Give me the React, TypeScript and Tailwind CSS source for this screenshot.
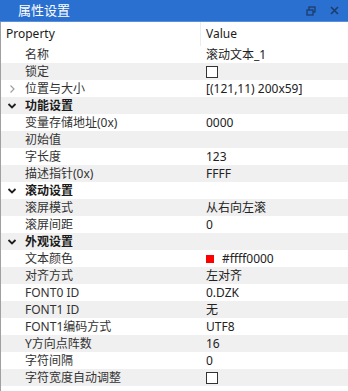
import React from 'react';

type Row =
    | { kind: 'cat'; label: string }
    | { kind: 'prop'; label: string; value?: string; check?: boolean; color?: string; collapsed?: boolean };

const rows: Row[] = [
    { kind: 'prop', label: '名称', value: '滚动文本_1' },
    { kind: 'prop', label: '锁定', check: true },
    { kind: 'prop', label: '位置与大小', value: '[(121,11) 200x59]', collapsed: true },
    { kind: 'cat', label: '功能设置' },
    { kind: 'prop', label: '变量存储地址(0x)', value: '0000' },
    { kind: 'prop', label: '初始值', value: '' },
    { kind: 'prop', label: '字长度', value: '123' },
    { kind: 'prop', label: '描述指针(0x)', value: 'FFFF' },
    { kind: 'cat', label: '滚动设置' },
    { kind: 'prop', label: '滚屏模式', value: '从右向左滚' },
    { kind: 'prop', label: '滚屏间距', value: '0' },
    { kind: 'cat', label: '外观设置' },
    { kind: 'prop', label: '文本颜色', value: '#ffff0000', color: '#ff0000' },
    { kind: 'prop', label: '对齐方式', value: '左对齐' },
    { kind: 'prop', label: 'FONT0 ID', value: '0.DZK' },
    { kind: 'prop', label: 'FONT1 ID', value: '无' },
    { kind: 'prop', label: 'FONT1编码方式', value: 'UTF8' },
    { kind: 'prop', label: 'Y方向点阵数', value: '16' },
    { kind: 'prop', label: '字符间隔', value: '0' },
    { kind: 'prop', label: '字符宽度自动调整', check: true },
];

const Chevron: React.FC<{ open: boolean }> = ({ open }) => (
    <svg width="10" height="10" viewBox="0 0 10 10" className="shrink-0">
        {open ? (
            <path d="M1.5 3 L5 6.5 L8.5 3" fill="none" stroke="#1f1f1f" strokeWidth="1.8" />
        ) : (
            <path d="M3.5 1.5 L7 5 L3.5 8.5" fill="none" stroke="#a0a0a0" strokeWidth="1.2" />
        )}
    </svg>
);

const Checkbox = () => <div className="w-[12px] h-[12px] border border-[#333] bg-white" />;

const App: React.FC = () => {
    return (
        <div
            className="w-[348px] h-[391px] bg-white overflow-hidden text-[12px] text-[#1a1a1a]"
            style={{ fontFamily: '"Noto Sans", "Noto Sans CJK SC", sans-serif' }}
        >
            <div className="h-[22px] bg-[#2a70d0] flex items-center pl-[18px] pr-[4px] border-b border-[#5c8fd6]">
                <span className="text-white text-[13px] leading-none flex-1">属性设置</span>
                <svg width="10" height="10" viewBox="0 0 10 10" className="mr-[14px]">
                    <rect x="3" y="1" width="6" height="5" fill="none" stroke="#1d3c6b" strokeWidth="1.3" />
                    <rect x="1" y="4" width="6" height="5" fill="#2a70d0" stroke="#1d3c6b" strokeWidth="1.3" />
                </svg>
                <svg width="9" height="9" viewBox="0 0 9 9" className="mr-[5px]">
                    <path d="M1 1 L8 8 M8 1 L1 8" stroke="#1d3c6b" strokeWidth="1.6" />
                </svg>
            </div>
            <div className="border-l border-[#a0a0a0] h-[369px]">
                <div className="h-[24px] flex items-center">
                    <div className="w-[200px] pl-[5px] border-r border-[#ececec] h-full flex items-center">Property</div>
                    <div className="pl-[5px]">Value</div>
                </div>
                {rows.map((r, i) => (
                    <div key={i} className={`h-[17px] flex items-center ${i % 2 === 1 ? 'bg-[#f0f0f0]' : 'bg-white'}`}>
                        <div className="w-[200px] flex items-center pl-[6px] gap-[8px]">
                            {r.kind === 'cat' ? (
                                <Chevron open />
                            ) : r.collapsed ? (
                                <Chevron open={false} />
                            ) : (
                                <span className="w-[10px]" />
                            )}
                            <span className={r.kind === 'cat' ? 'font-bold' : 'text-[#333]'}>{r.label}</span>
                        </div>
                        {r.kind === 'prop' && (
                            <div className="pl-[5px] flex items-center gap-[8px]">
                                {r.check && <Checkbox />}
                                {r.color && <div className="w-[8px] h-[8px]" style={{ background: r.color }} />}
                                {r.value && <span className="text-[#222]">{r.value}</span>}
                            </div>
                        )}
                    </div>
                ))}
            </div>
        </div>
    );
};

export default App;
